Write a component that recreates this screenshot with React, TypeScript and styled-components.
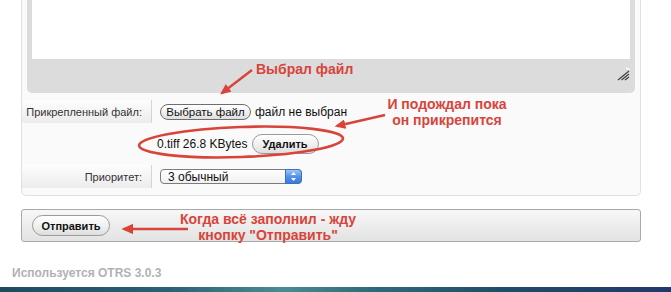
import * as React from "react"
import styled, { createGlobalStyle } from "styled-components"

const RED = "#d8443a"

const App = () => (
  <>
    <GlobalStyle />
    <Page>
      <Panel>
        <Editor>
          <TextArea />
          <Grip viewBox="0 0 13 14">
            <path d="M9 1.5 Q11.5 1 12.5 3" stroke="#fff" strokeWidth="1.2" fill="none" />
            <path d="M1 13 L12 4 M4.5 13 L12 7 M8 13 L12 10" stroke="#444" strokeWidth="1.3" />
          </Grip>
        </Editor>

        <Row $height={23} $top={7}>
          <Label>Прикрепленный файл:</Label>
          <Value>
            <PillButton $width={91} $height={16}>Выбрать файл</PillButton>
            <Plain>файл не выбран</Plain>
          </Value>
        </Row>

        <Row $height={42}>
          <Label $blank />
          <Value $shift={-3}>
            <Plain>0.tiff 26.8 KBytes</Plain>
            <PillButton $width={67} $height={20} $bold>
              Удалить
            </PillButton>
          </Value>
        </Row>

        <Row $height={23}>
          <Label>Приоритет:</Label>
          <Value>
            <Select>
              <span>3 обычный</span>
              <Stepper>
                <svg width="7" height="11" viewBox="0 0 7 11">
                  <path d="M3.5 1 L6 4 L1 4 Z M3.5 10 L6 7 L1 7 Z" fill="#fff" />
                </svg>
              </Stepper>
            </Select>
          </Value>
        </Row>
      </Panel>

      <SubmitBar>
        <PillButton $width={78} $height={21} $bold>
          Отправить
        </PillButton>
      </SubmitBar>

      <Footer>Используется OTRS 3.0.3</Footer>
      <BottomStripe />

      <Note $left={256} $top={61}>Выбрал файл</Note>
      <Note $left={380} $top={96} $width={134}>
        И подождал пока
        <br />
        он прикрепится
      </Note>
      <Note $left={172} $top={211} $width={192}>
        Когда всё заполнил - жду
        <br />
        кнопку "Отправить"
      </Note>

      <Overlay viewBox="0 0 671 292">
        <defs>
          <marker id="head" markerWidth="4.5" markerHeight="4" refX="3.5" refY="2" orient="auto">
            <path d="M0 0 L4.5 2 L0 4 Z" fill={RED} />
          </marker>
        </defs>
        <line x1="252" y1="70" x2="222" y2="93" stroke={RED} strokeWidth="2.4" markerEnd="url(#head)" />
        <line x1="385" y1="115" x2="337" y2="126" stroke={RED} strokeWidth="2.4" markerEnd="url(#head)" />
        <line x1="188" y1="229" x2="124" y2="229" stroke={RED} strokeWidth="2.6" markerEnd="url(#head)" />
        <ellipse
          cx="241"
          cy="142"
          rx="102"
          ry="15"
          transform="rotate(-2 241 142)"
          fill="none"
          stroke={RED}
          strokeWidth="2.6"
        />
      </Overlay>
    </Page>
  </>
)

export default App

// Styles
const GlobalStyle = createGlobalStyle`
  html, body {
    margin: 0;
    padding: 0;
    background: #fff;
  }
  body {
    font-family: "Liberation Sans", Arial, sans-serif;
    color: #222;
  }
`

const Page = styled.div`
  position: relative;
  width: 671px;
  height: 292px;
  overflow: hidden;
  display: flex;
  flex-direction: column;
`

const Panel = styled.div`
  margin: 0 30px 0 21px;
  padding-bottom: 7px;
  background: #fafafa;
  border: 1px solid #e1e1e1;
  border-top: none;
  border-radius: 0 0 5px 5px;
`

const Editor = styled.div`
  position: relative;
  margin: 0 5px;
  padding: 0 5px 34px;
  background: #dcdcdc;
  border-radius: 0 0 5px 5px;
`

const TextArea = styled.div`
  height: 59px;
  background: #fff;
`

const Grip = styled.svg`
  position: absolute;
  right: 5px;
  bottom: 12px;
  width: 13px;
  height: 14px;
`

const Row = styled.div<{ $height: number; $top?: number }>`
  display: flex;
  align-items: center;
  height: ${(p) => p.$height}px;
  margin-top: ${(p) => p.$top ?? 0}px;
`

const Label = styled.div<{ $blank?: boolean }>`
  box-sizing: border-box;
  width: 130px;
  align-self: stretch;
  display: flex;
  align-items: center;
  justify-content: flex-end;
  padding-right: 9px;
  font-size: 11px;
  color: #333;
  background: ${(p) => (p.$blank ? "none" : "linear-gradient(#fdfdfd, #ececec)")};
  border-right: 1px solid ${(p) => (p.$blank ? "transparent" : "#d4d4d4")};
`

const Value = styled.div<{ $shift?: number }>`
  display: flex;
  align-items: center;
  gap: 4px;
  padding-left: ${(p) => 8 + (p.$shift ?? 0)}px;
`

const Plain = styled.span`
  font-size: 12px;
  color: #111;
  white-space: nowrap;
`

const PillButton = styled.button<{ $width: number; $height: number; $bold?: boolean }>`
  box-sizing: border-box;
  width: ${(p) => p.$width}px;
  height: ${(p) => p.$height}px;
  padding: 0;
  font-family: inherit;
  font-size: ${(p) => (p.$bold ? 11 : 11.5)}px;
  font-weight: ${(p) => (p.$bold ? 700 : 400)};
  color: #111;
  border: 1px solid ${(p) => (p.$bold ? "#9a9a9a" : "#6e6e6e")};
  border-radius: 11px;
  background: linear-gradient(#ffffff, #f1f1f1 50%, #dedede);
  white-space: nowrap;
`

const Select = styled.div`
  box-sizing: border-box;
  position: relative;
  width: 142px;
  height: 15px;
  display: flex;
  align-items: center;
  padding-left: 7px;
  font-size: 12px;
  color: #111;
  border: 1px solid #7c7c7c;
  border-radius: 4px;
  background: linear-gradient(#ffffff, #f0f0f0);
`

const Stepper = styled.div`
  position: absolute;
  top: -1px;
  right: -1px;
  width: 17px;
  height: 15px;
  display: flex;
  align-items: center;
  justify-content: center;
  border-radius: 0 4px 4px 0;
  border: 1px solid #3c6fc4;
  box-sizing: border-box;
  background: linear-gradient(#9cc6f5, #4d8fe6 55%, #3a7be0);
`

const SubmitBar = styled.div`
  display: flex;
  align-items: center;
  height: 31px;
  margin: 13px 30px 0 21px;
  padding-left: 10px;
  border: 1px solid #a9a9a9;
  border-radius: 3px;
  background: linear-gradient(#f7f7f7, #e3e3e3);
`

const Footer = styled.div`
  margin-top: 24px;
  padding-left: 12px;
  font-size: 12px;
  line-height: 14px;
  font-weight: 700;
  color: #b2b2b2;
`

const BottomStripe = styled.div`
  margin-top: auto;
  height: 5px;
  background: linear-gradient(
    90deg,
    #1e4a5e 0%,
    #2a6174 25%,
    #4b8b93 42%,
    #2f6b7a 55%,
    #1f4c68 75%,
    #22386a 100%
  );
`

const Note = styled.div<{ $left: number; $top: number; $width?: number }>`
  position: absolute;
  left: ${(p) => p.$left}px;
  top: ${(p) => p.$top}px;
  width: ${(p) => (p.$width ? `${p.$width}px` : "auto")};
  font-size: 14px;
  line-height: 16px;
  font-weight: 700;
  text-align: center;
  color: ${RED};
  white-space: nowrap;
`

const Overlay = styled.svg`
  position: absolute;
  left: 0;
  top: 0;
  width: 671px;
  height: 292px;
  pointer-events: none;
`
